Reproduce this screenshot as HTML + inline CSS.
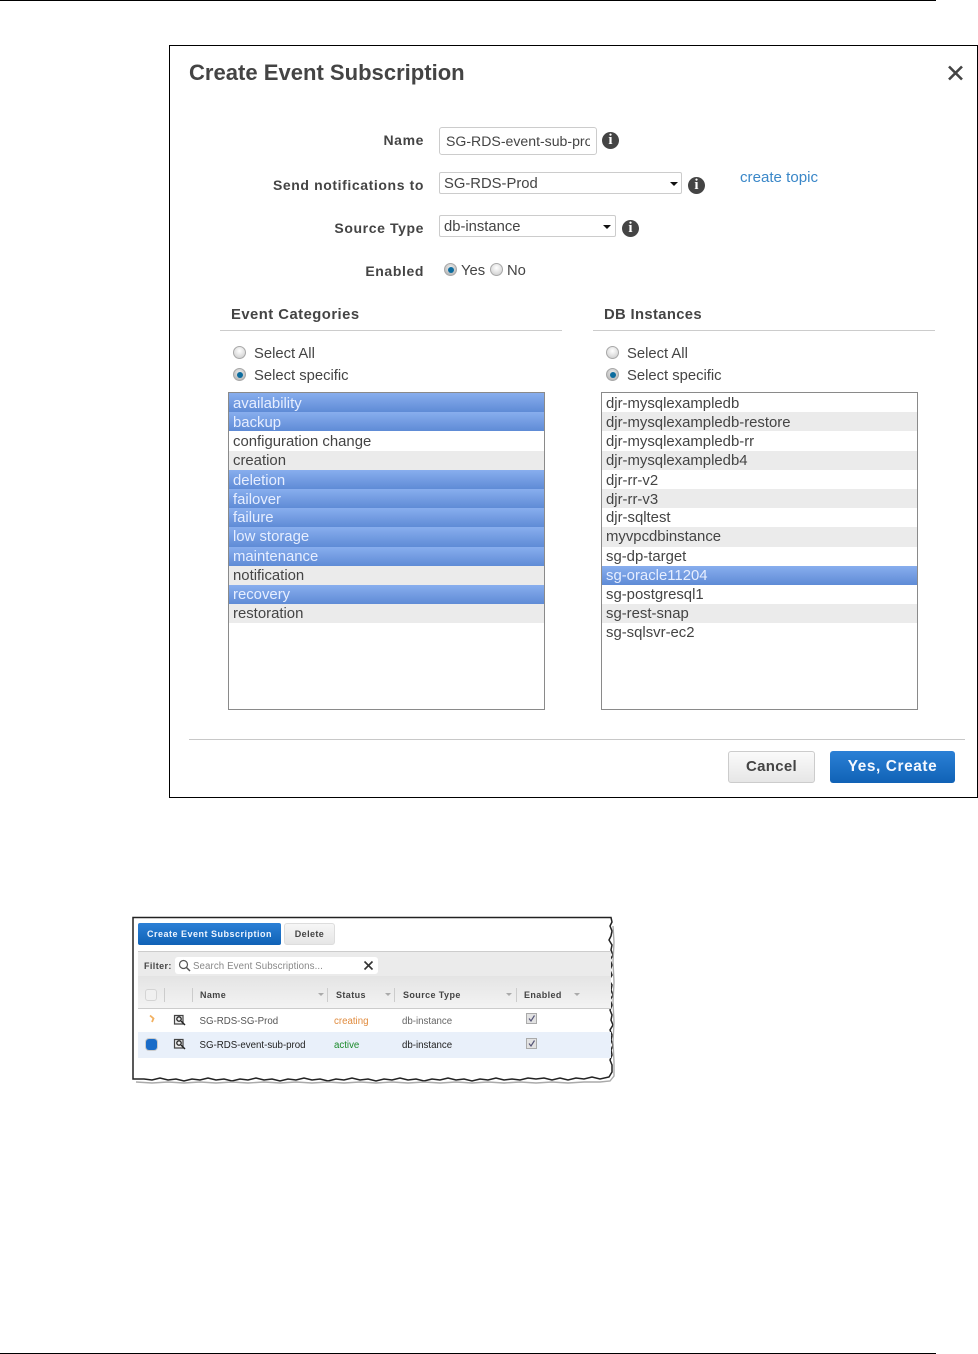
<!DOCTYPE html>
<html><head><meta charset="utf-8">
<style>
html,body{margin:0;padding:0;background:#fff}
body{position:relative;width:978px;height:1354px;overflow:hidden;font-family:"Liberation Sans",sans-serif;color:#444}
div,span{position:absolute;white-space:nowrap;box-sizing:border-box}
.l{font-weight:bold;font-size:14px;color:#444;letter-spacing:.6px;text-align:right;right:554px;line-height:18px}
.t{font-size:14.8px;line-height:18px;color:#444}
.h{font-weight:bold;font-size:14.8px;letter-spacing:.35px;color:#444;line-height:18px}
.i{width:17px;height:17px;border-radius:50%;background:#444;color:#fff;font:bold 15px/17px "Liberation Serif",serif;text-align:center}
.r{width:13px;height:13px;border-radius:50%;border:1px solid #a8a8a8;background:radial-gradient(circle at 50% 35%,#fff,#c8c8c8)}
.r.on{background:radial-gradient(circle at 50% 35%,#eee,#aaa)}
.r.on::after{content:"";position:absolute;left:2.5px;top:2.5px;width:6px;height:6px;border-radius:50%;background:#0d6c9e}
.row{left:0;right:0;height:19.2px;font-size:14.9px;line-height:22px;padding-left:4px;color:#444}
.row.a{line-height:21px}
.row.b{line-height:20px}
.g{background:#ebebeb}
.s{background:linear-gradient(#88aeee,#5f8bd6);color:#e6eeff}
.list{background:#fff;border:1px solid #8a8a8a;width:317px;height:318px;top:392px}
.sel{background:#fff;border:1px solid #ccc;border-radius:2px;height:22px}
.arr{width:0;height:0;border-left:4px solid transparent;border-right:4px solid transparent;border-top:4px solid #111}
.sm{font-size:9.7px;line-height:12px;color:#555}
.th{font-weight:bold;font-size:9px;line-height:12px;letter-spacing:.4px;color:#444}
.ta{width:0;height:0;border-left:3px solid transparent;border-right:3px solid transparent;border-top:3px solid #aaa}
.sp{width:1px;height:14px;background:#ccc;top:988px}
</style></head><body>
<div style="left:0;top:0;width:936px;height:1px;background:#000"></div>
<div style="left:0;top:1353px;width:936px;height:1px;background:#000"></div>

<div style="left:169px;top:45px;width:809px;height:753px;border:1px solid #000;background:#fff"></div>
<div style="left:189px;top:59px;font-weight:bold;font-size:22.05px;line-height:27px;color:#444">Create Event Subscription</div>
<svg style="position:absolute;left:947px;top:65px" width="17" height="16"><path d="M2 1.500L15 14.500M15 1.500L2 14.500" stroke="#444" stroke-width="2.600" fill="none"/></svg>

<div class="l" style="top:131px">Name</div>
<div style="left:439px;top:127px;width:158px;height:28px;border:1px solid #ccc;border-radius:3px;overflow:hidden;background:#fff"><span class="t" style="left:6px;top:4px;width:144px;overflow:hidden;display:block;font-size:14.1px">SG-RDS-event-sub-prod</span></div>
<div class="i" style="left:602px;top:132px">i</div>

<div class="l" style="top:176px">Send notifications to</div>
<div class="sel" style="left:439px;top:172px;width:243px"><span class="t" style="left:4px;top:2px">SG-RDS-Prod</span><span class="arr" style="left:230px;top:9px"></span></div>
<div class="i" style="left:688px;top:177px">i</div>
<div class="t" style="left:740px;top:169px;color:#3a87c8;font-size:15.1px">create topic</div>

<div class="l" style="top:219px">Source Type</div>
<div class="sel" style="left:439px;top:215px;width:177px"><span class="t" style="left:4px;top:2px">db-instance</span><span class="arr" style="left:163px;top:9px"></span></div>
<div class="i" style="left:622px;top:220px">i</div>

<div class="l" style="top:262px">Enabled</div>
<div class="r on" style="left:444px;top:263px"></div>
<div class="t" style="left:461px;top:262px">Yes</div>
<div class="r" style="left:490px;top:263px"></div>
<div class="t" style="left:507px;top:262px">No</div>

<div class="h" style="left:231px;top:306px;letter-spacing:.48px">Event Categories</div>
<div style="left:220px;top:330px;width:342px;height:1px;background:#ccc"></div>
<div class="h" style="left:604px;top:306px">DB Instances</div>
<div style="left:593px;top:330px;width:342px;height:1px;background:#ccc"></div>

<div class="r" style="left:233px;top:346px"></div>
<div class="t" style="left:254px;top:345px">Select All</div>
<div class="r on" style="left:233px;top:368px"></div>
<div class="t" style="left:254px;top:367px">Select specific</div>
<div class="r" style="left:606px;top:346px"></div>
<div class="t" style="left:627px;top:345px">Select All</div>
<div class="r on" style="left:606px;top:368px"></div>
<div class="t" style="left:627px;top:367px">Select specific</div>

<div class="list" style="left:228px">
<div class="row s" style="top:0">availability</div>
<div class="row s" style="top:19.2px">backup</div>
<div class="row" style="top:38.4px">configuration change</div>
<div class="row g a" style="top:57.6px">creation</div>
<div class="row s" style="top:76.8px">deletion</div>
<div class="row s" style="top:96px">failover</div>
<div class="row s a" style="top:115.2px">failure</div>
<div class="row s a" style="top:134.4px">low storage</div>
<div class="row s b" style="top:153.6px">maintenance</div>
<div class="row g a" style="top:172.8px">notification</div>
<div class="row s a" style="top:192px">recovery</div>
<div class="row g a" style="top:211.2px">restoration</div>
</div>

<div class="list" style="left:601px">
<div class="row" style="top:0">djr-mysqlexampledb</div>
<div class="row g" style="top:19.2px">djr-mysqlexampledb-restore</div>
<div class="row" style="top:38.4px">djr-mysqlexampledb-rr</div>
<div class="row g a" style="top:57.6px">djr-mysqlexampledb4</div>
<div class="row" style="top:76.8px">djr-rr-v2</div>
<div class="row g" style="top:96px">djr-rr-v3</div>
<div class="row a" style="top:115.2px">djr-sqltest</div>
<div class="row g a" style="top:134.4px">myvpcdbinstance</div>
<div class="row b" style="top:153.6px">sg-dp-target</div>
<div class="row s a" style="top:172.8px">sg-oracle11204</div>
<div class="row a" style="top:192px">sg-postgresql1</div>
<div class="row g a" style="top:211.2px">sg-rest-snap</div>
<div class="row a" style="top:230.4px">sg-sqlsvr-ec2</div>
</div>

<div style="left:189px;top:739px;width:776px;height:1px;background:#c8c8c8"></div>
<div style="left:728px;top:751px;width:87px;height:32px;border:1px solid #ccc;border-radius:3px;background:linear-gradient(#fafafa,#e6e6e6);text-align:center;font-weight:bold;font-size:15px;line-height:30px;color:#444;letter-spacing:.3px">Cancel</div>
<div style="left:830px;top:751px;width:125px;height:32px;border-radius:3px;background:linear-gradient(#2b80d6,#1062b6);text-align:center;font-weight:bold;font-size:15.4px;line-height:31px;color:#f4f8ff;letter-spacing:.6px">Yes, Create</div>

<svg style="position:absolute;left:128px;top:912px" width="492" height="178">
<path d="M5 5.500H483L484 10L482 14L484 19L483 24L481 28L484 33L483 38L485 43L482 48L484 53L482 58L484 63L481 68L484 73L483 78L485 83L482 88L484 93L482 98L484 103L483 108L485 113L482 118L484 123L483 128L485 133L483 138L484 143L482 148L484 153L484 160L481 165L472 167L464 165L456 167L448 166L440 168L432 166L424 168L416 166L408 167L400 166L392 168L384 167L376 168L368 166L360 168L352 167L344 169L336 167L328 168L320 166L312 168L304 167L296 169L288 167L280 168L272 166L264 168L256 167L248 169L240 167L232 168L224 166L216 168L208 167L200 169L192 167L184 168L176 166L168 168L160 167L152 169L144 167L136 168L128 166L120 168L112 167L104 169L96 167L88 168L80 166L72 168L64 167L56 169L48 167L40 168L32 166L24 168L16 167L5 167Z" fill="#fff" stroke="#222" stroke-width="1.500"/>
<path d="M8 170L24 171L40 170L56 171L72 170L88 171L104 170L120 171L136 170L152 171L168 170L184 171L200 170L216 171L232 170L248 171L264 170L280 171L296 170L312 171L328 170L344 171L360 170L376 171L392 170L408 171L424 170L440 171L456 170L472 170L482 169L486 164L486 150L485 130L486 110L485 90L486 70L485 50L486 30L485 14" fill="none" stroke="#aaa" stroke-width="1.400"/>
</svg>

<div style="left:138px;top:923px;width:143px;height:22px;border-radius:2px;background:linear-gradient(#2b80d6,#1062b6);color:#eef5ff;text-align:center;font-weight:bold;font-size:9px;line-height:22px;letter-spacing:.5px">Create Event Subscription</div>
<div style="left:284px;top:923px;width:51px;height:22px;border:1px solid #ddd;border-radius:3px;background:linear-gradient(#f6f6f6,#e6e6e6);color:#444;text-align:center;font-weight:bold;font-size:9px;line-height:20px;letter-spacing:.4px">Delete</div>
<div style="left:138px;top:951px;width:473px;height:1px;background:#ccc"></div>
<div style="left:138px;top:952px;width:473px;height:24px;background:#ebebeb"></div>
<div style="left:138px;top:976px;width:473px;height:32px;background:linear-gradient(#e4e4e4,#f3f3f3)"></div>
<div style="left:138px;top:1008px;width:473px;height:1px;background:#ccc"></div>
<div class="th" style="left:144px;top:960px">Filter:</div>
<div style="left:175px;top:957px;width:203px;height:17px;background:#fff;border-radius:3px"></div>
<svg style="position:absolute;left:178px;top:959px" width="13" height="13"><circle cx="5.500" cy="5.500" r="4" fill="none" stroke="#555" stroke-width="1.200"/><path d="M8.500 8.500L12 12" stroke="#555" stroke-width="1.500"/></svg>
<div class="sm" style="left:193px;top:961px;color:#888;letter-spacing:.1px">Search Event Subscriptions...</div>
<svg style="position:absolute;left:363px;top:960px" width="11" height="11"><path d="M1.500 1.500L9.500 9.500M9.500 1.500L1.500 9.500" stroke="#333" stroke-width="1.600"/></svg>

<div style="left:145px;top:989px;width:12px;height:12px;border:1px solid #d4d4d4;border-radius:3px;background:#f0f0f0"></div>
<div class="sp" style="left:164px"></div><div class="sp" style="left:192px"></div>
<div class="th" style="left:200px;top:989px">Name</div><div class="ta" style="left:318px;top:993px"></div>
<div class="sp" style="left:327px"></div>
<div class="th" style="left:336px;top:989px">Status</div><div class="ta" style="left:385px;top:993px"></div>
<div class="sp" style="left:394px"></div>
<div class="th" style="left:403px;top:989px">Source Type</div><div class="ta" style="left:506px;top:993px"></div>
<div class="sp" style="left:516px"></div>
<div class="th" style="left:524px;top:989px">Enabled</div><div class="ta" style="left:574px;top:993px"></div>

<div style="left:138px;top:1032px;width:473px;height:26px;background:#e9f0fa"></div>
<svg style="position:absolute;left:148px;top:1014px" width="8" height="11"><path d="M2 1.500L5.500 4.500L4 8" stroke="#f2b060" stroke-width="1.800" fill="none"/></svg>
<div style="left:146px;top:1039px;width:11px;height:11px;border-radius:3px;background:#1a6cc8;box-shadow:0 0 0 1px #ccc"></div>
<svg style="position:absolute;left:173px;top:1014px" width="13" height="13"><path d="M1.500 1.500H10V10H1.500Z" fill="#eee" stroke="#444" stroke-width="1.200"/><circle cx="6" cy="5" r="2.200" fill="none" stroke="#222" stroke-width="1.300"/><path d="M8 7L12 11" stroke="#222" stroke-width="1.400"/></svg>
<svg style="position:absolute;left:173px;top:1038px" width="13" height="13"><path d="M1.500 1.500H10V10H1.500Z" fill="#eee" stroke="#444" stroke-width="1.200"/><circle cx="6" cy="5" r="2.200" fill="none" stroke="#222" stroke-width="1.300"/><path d="M8 7L12 11" stroke="#222" stroke-width="1.400"/></svg>
<div class="sm" style="left:199.5px;top:1016px">SG-RDS-SG-Prod</div>
<div class="sm" style="left:334px;top:1016px;color:#e08a3c">creating</div>
<div class="sm" style="left:402px;top:1016px;color:#666">db-instance</div>
<div class="sm" style="left:199.5px;top:1040px;color:#222">SG-RDS-event-sub-prod</div>
<div class="sm" style="left:334px;top:1040px;color:#1a8a2a">active</div>
<div class="sm" style="left:402px;top:1040px;color:#222">db-instance</div>
<svg style="position:absolute;left:526px;top:1013px" width="11" height="11"><rect x=".5" y=".5" width="10" height="10" fill="#e2e2e2" stroke="#aaa"/><path d="M3 5.500L5 8L8.500 2.500" stroke="#557" stroke-width="1.200" fill="none"/></svg>
<svg style="position:absolute;left:526px;top:1038px" width="11" height="11"><rect x=".5" y=".5" width="10" height="10" fill="#e2e2e2" stroke="#aaa"/><path d="M3 5.500L5 8L8.500 2.500" stroke="#557" stroke-width="1.200" fill="none"/></svg>
</body></html>
